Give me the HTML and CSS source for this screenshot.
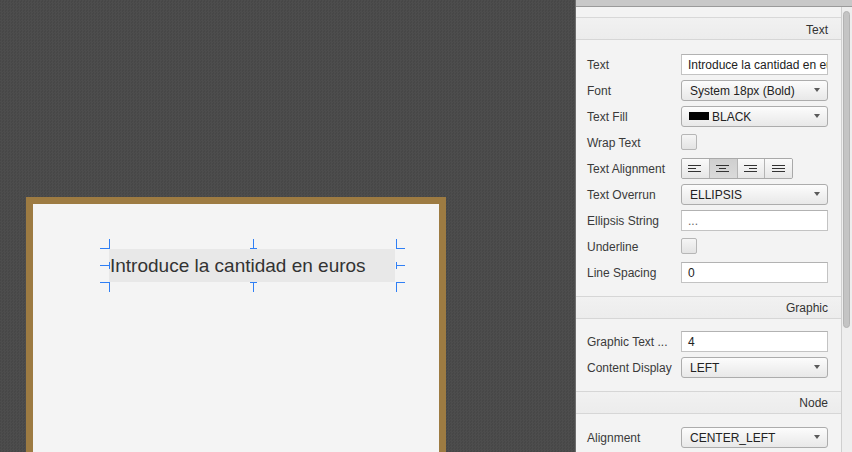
FILE: index.html
```html
<!DOCTYPE html>
<html>
<head>
<meta charset="utf-8">
<link rel="stylesheet" href="styles.css">
</head>
<body>
<div class="canvas">
  <div class="frame">
    <div class="selection">
      <div class="label">Introduce la cantidad en euros</div>
      <svg class="handles" width="307" height="54" viewBox="0 0 307 54">
        <g stroke="#2f7ff5" stroke-width="1" fill="none">
          <path d="M10.5 0V10M1 9.5H11"/>
          <path d="M1 26.5H10M10.5 23V30"/>
          <path d="M1 43.5H11M10.5 43V53"/>
          <path d="M154.5 0V10M151 9.5H158"/>
          <path d="M151 43.5H158M154.5 43V53"/>
          <path d="M297.5 0V10M297 9.5H306"/>
          <path d="M297 26.5H306M297.5 23V30"/>
          <path d="M297 43.5H306M297.5 43V53"/>
        </g>
      </svg>
    </div>
  </div>
</div>
<div class="panel">
  <div class="topbar"></div>
  <div class="panel-main">
    <div class="sheet">
      <div class="collapsed"></div>
      <div class="sec-title first">Text</div>
      <div class="sec-body sec-text">
        <div class="row"><div class="lbl">Text</div><div class="input">Introduce la cantidad en euros</div></div>
        <div class="row"><div class="lbl">Font</div><div class="combo"><span>System 18px (Bold)</span><i class="arrow"></i></div></div>
        <div class="row"><div class="lbl">Text Fill</div><div class="combo"><span class="swatch"></span><span>BLACK</span><i class="arrow"></i></div></div>
        <div class="row"><div class="lbl">Wrap Text</div><div class="check"></div></div>
        <div class="row"><div class="lbl">Text Alignment</div>
          <div class="aligns">
            <div class="abtn"><svg width="14" height="7" viewBox="0 0 14 7"><path d="M0 0.5H13M0 3.5H8M0 6.5H13" stroke="#333"/></svg></div>
            <div class="abtn on"><svg width="14" height="7" viewBox="0 0 14 7"><path d="M0 0.5H13M3 3.5H10M0 6.5H13" stroke="#333"/></svg></div>
            <div class="abtn"><svg width="14" height="7" viewBox="0 0 14 7"><path d="M0 0.5H13M5 3.5H13M0 6.5H13" stroke="#333"/></svg></div>
            <div class="abtn"><svg width="14" height="7" viewBox="0 0 14 7"><path d="M0 0.5H13M0 3.5H13M0 6.5H13" stroke="#333"/></svg></div>
          </div>
        </div>
        <div class="row"><div class="lbl">Text Overrun</div><div class="combo"><span>ELLIPSIS</span><i class="arrow"></i></div></div>
        <div class="row"><div class="lbl">Ellipsis String</div><div class="input dots">...</div></div>
        <div class="row"><div class="lbl">Underline</div><div class="check"></div></div>
        <div class="row"><div class="lbl">Line Spacing</div><div class="input">0</div></div>
      </div>
      <div class="sec-title">Graphic</div>
      <div class="sec-body sec-graphic">
        <div class="row"><div class="lbl">Graphic Text ...</div><div class="input">4</div></div>
        <div class="row"><div class="lbl">Content Display</div><div class="combo"><span>LEFT</span><i class="arrow"></i></div></div>
      </div>
      <div class="sec-title">Node</div>
      <div class="sec-body sec-node">
        <div class="row"><div class="lbl">Alignment</div><div class="combo"><span>CENTER_LEFT</span><i class="arrow"></i></div></div>
      </div>
    </div>
    <div class="scrollbar"><div class="thumb"></div></div>
  </div>
</div>
</body>
</html>
```
FILE: styles.css
```css
html, body {
  margin: 0;
  padding: 0;
}
body {
  width: 852px;
  height: 452px;
  overflow: hidden;
  display: flex;
  font-family: "Liberation Sans", Arial, sans-serif;
}
.canvas {
  flex: 0 0 575px;
  background-color: #4a4a4a;
  background-image: repeating-conic-gradient(#4d4d4d 0 25%, #474747 0 50%);
  background-size: 3px 3px;
  overflow: hidden;
}
.frame {
  box-sizing: border-box;
  margin: 197px 0 0 26px;
  width: 420px;
  height: 300px;
  border: 7px solid #9d7b42;
  background: #f4f4f4;
  padding: 45px 0 0 76px;
}
.selection {
  position: relative;
  width: 286px;
  height: 33px;
}
.label {
  width: 286px;
  height: 33px;
  background: #e8e8e8;
  color: #333;
  font-size: 19px;
  line-height: 33px;
  padding-left: 1px;
  box-sizing: border-box;
  white-space: nowrap;
}
.handles {
  position: absolute;
  left: -10px;
  top: -10px;
}
.panel {
  flex: 1;
  display: flex;
  flex-direction: column;
  border-left: 1px solid #6e6e6e;
  background: #f3f3f3;
  min-width: 0;
}
.topbar {
  height: 6px;
  background: #c8c8c8;
  border-bottom: 1px solid #9a9a9a;
}
.panel-main {
  flex: 1;
  display: flex;
  min-height: 0;
}
.sheet {
  flex: 1;
  overflow: hidden;
  min-width: 0;
}
.scrollbar {
  width: 10px;
  border-left: 1px solid #cfcfcf;
  background: #eeeeee;
  padding: 4px 0 0 1px;
  box-sizing: border-box;
  flex: 0 0 11px;
}
.thumb {
  width: 7px;
  height: 317px;
  box-sizing: border-box;
  background: #c4c4c4;
  border: 1px solid #b3b3b3;
  border-radius: 4px;
}
.collapsed {
  height: 10px;
  border-bottom: 1px solid #d8d8d8;
}
.sec-title {
  height: 21px;
  line-height: 22px;
  text-align: right;
  padding-right: 13px;
  font-size: 12px;
  color: #333;
  border-bottom: 1px solid #d6d6d6;
  background: linear-gradient(#f1f1f1, #ececec);
}
.sec-title.first {
  line-height: 25px;
}
.sec-body {
  padding: 11px 13px 11px 11px;
  border-bottom: 1px solid #d6d6d6;
}
.sec-graphic {
  padding-top: 9px;
}
.sec-node {
  padding-top: 10px;
  border-bottom: none;
}
.row {
  display: flex;
  align-items: center;
  height: 26px;
}
.lbl {
  width: 94px;
  flex: 0 0 94px;
  font-size: 12px;
  color: #3a3a3a;
  white-space: nowrap;
  padding-top: 2px;
}
.input {
  box-sizing: border-box;
  width: 147px;
  height: 21px;
  background: #fff;
  border: 1px solid #c3c3c3;
  border-top-color: #b2b2b2;
  padding: 1px 6px 0;
  font-size: 12px;
  line-height: 19px;
  color: #222;
  white-space: nowrap;
  overflow: hidden;
}
.dots {
  color: #666;
}
.combo {
  box-sizing: border-box;
  width: 147px;
  height: 21px;
  display: flex;
  align-items: center;
  padding: 1px 7px 0 8px;
  border: 1px solid #acacac;
  border-radius: 3px;
  background: linear-gradient(#fcfcfc, #e8e8e8);
  font-size: 12px;
  color: #222;
  white-space: nowrap;
}
.combo .swatch {
  width: 20px;
  height: 8px;
  background: #000;
  margin: 0 3px 1px -1px;
}
.arrow {
  margin-left: auto;
  margin-bottom: 1px;
  width: 0;
  height: 0;
  border-left: 3.5px solid transparent;
  border-right: 3.5px solid transparent;
  border-top: 4px solid #5a5a5a;
}
.check {
  box-sizing: border-box;
  width: 16px;
  height: 16px;
  border: 1px solid #b6b6b6;
  border-radius: 2px;
  background: linear-gradient(#f5f5f5, #e3e3e3);
}
.aligns {
  box-sizing: border-box;
  width: 112px;
  height: 21px;
  display: flex;
  border: 1px solid #a9a9a9;
  border-radius: 2px;
  overflow: hidden;
}
.abtn {
  flex: 1;
  display: flex;
  align-items: center;
  justify-content: center;
  background: linear-gradient(#fafafa, #e6e6e6);
  border-left: 1px solid #b4b4b4;
}
.abtn:first-child {
  border-left: none;
}
.abtn.on {
  background: linear-gradient(#cfcfcf, #dadada);
}
```
